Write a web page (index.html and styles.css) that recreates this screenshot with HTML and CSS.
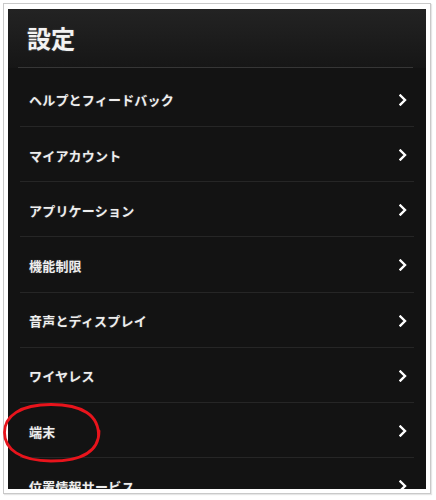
FILE: index.html
```html
<!DOCTYPE html>
<html lang="ja">
<head>
<meta charset="utf-8">
<link rel="stylesheet" href="styles.css">
</head>
<body>
<div class="frame">
  <div class="panel">
    <div class="header"><h1 class="title">設定</h1></div>
    <ul class="list">
      <li class="row first"><span class="label">ヘルプとフィードバック</span><svg class="chev" viewBox="0 0 8 12"><path d="M1.5 1.5 L6 6 L1.5 10.5"/></svg></li>
      <li class="row"><span class="label">マイアカウント</span><svg class="chev" viewBox="0 0 8 12"><path d="M1.5 1.5 L6 6 L1.5 10.5"/></svg></li>
      <li class="row"><span class="label">アプリケーション</span><svg class="chev" viewBox="0 0 8 12"><path d="M1.5 1.5 L6 6 L1.5 10.5"/></svg></li>
      <li class="row"><span class="label">機能制限</span><svg class="chev" viewBox="0 0 8 12"><path d="M1.5 1.5 L6 6 L1.5 10.5"/></svg></li>
      <li class="row"><span class="label">音声とディスプレイ</span><svg class="chev" viewBox="0 0 8 12"><path d="M1.5 1.5 L6 6 L1.5 10.5"/></svg></li>
      <li class="row"><span class="label">ワイヤレス</span><svg class="chev" viewBox="0 0 8 12"><path d="M1.5 1.5 L6 6 L1.5 10.5"/></svg></li>
      <li class="row"><span class="label">端末</span><svg class="chev" viewBox="0 0 8 12"><path d="M1.5 1.5 L6 6 L1.5 10.5"/></svg></li>
      <li class="row"><span class="label">位置情報サービス</span><svg class="chev" viewBox="0 0 8 12"><path d="M1.5 1.5 L6 6 L1.5 10.5"/></svg></li>
    </ul>
  </div>
</div>
<svg class="mark" width="104" height="66" viewBox="0 0 104 66"><path d="M96.5 36 C97.5 14 80 3.5 49 3.5 C18 3.5 2.5 15 2.5 31.5 C2.5 48 18 60 49 60 C80 60 97 50 97 30"/></svg>
</body>
</html>
```
FILE: styles.css
```css
html, body {
  margin: 0;
  padding: 0;
  background: #ffffff;
}
body {
  width: 436px;
  height: 500px;
  overflow: hidden;
  position: relative;
  padding: 3px 0 0 3px;
  box-sizing: border-box;
  font-family: "Noto Sans CJK JP", "Noto Sans", sans-serif;
}
.frame {
  width: 428px;
  height: 491px;
  box-sizing: border-box;
  border: 1px solid #c9c9c9;
  padding: 5px 4px 4px 4px;
  box-shadow: 1px 1px 1px #e6e6e6;
}
.panel {
  width: 418px;
  height: 480px;
  overflow: hidden;
  background: #131313;
}
.header {
  height: 59px;
  box-sizing: border-box;
  background: linear-gradient(#232323, #161616);
  margin: 0;
  padding: 14px 0 0 19px;
  position: relative;
}
.header::after {
  content: "";
  position: absolute;
  left: 10px;
  right: 13px;
  bottom: 0;
  height: 1px;
  background: #363636;
}
.title {
  margin: 0;
  font-size: 24px;
  line-height: 30px;
  font-weight: 700;
  color: #f2f2f2;
  text-shadow: 0 0 2px rgba(255,255,255,0.25);
}
.list {
  list-style: none;
  margin: 0;
  padding: 0;
}
.row {
  height: 55.2px;
  box-sizing: border-box;
  display: flex;
  align-items: center;
  justify-content: space-between;
  margin: 0 12px 0 12px;
  padding: 2px 7px 0 9px;
  border-bottom: 1px solid #262626;
}
.row.first {
  height: 59px;
  padding-top: 5px;
}
.label {
  color: #eeeeee;
  font-size: 13px;
  font-weight: 700;
  letter-spacing: 0.2px;
  text-shadow: 0 0 2px rgba(255,255,255,0.2);
}
.chev {
  width: 8px;
  height: 12px;
  fill: none;
  stroke: #ffffff;
  stroke-width: 2.4;
  stroke-linecap: square;
}
.mark {
  position: absolute;
  left: 2px;
  top: 401px;
  fill: none;
  stroke: #e8141c;
  stroke-width: 2.8;
  stroke-linecap: round;
}
```
